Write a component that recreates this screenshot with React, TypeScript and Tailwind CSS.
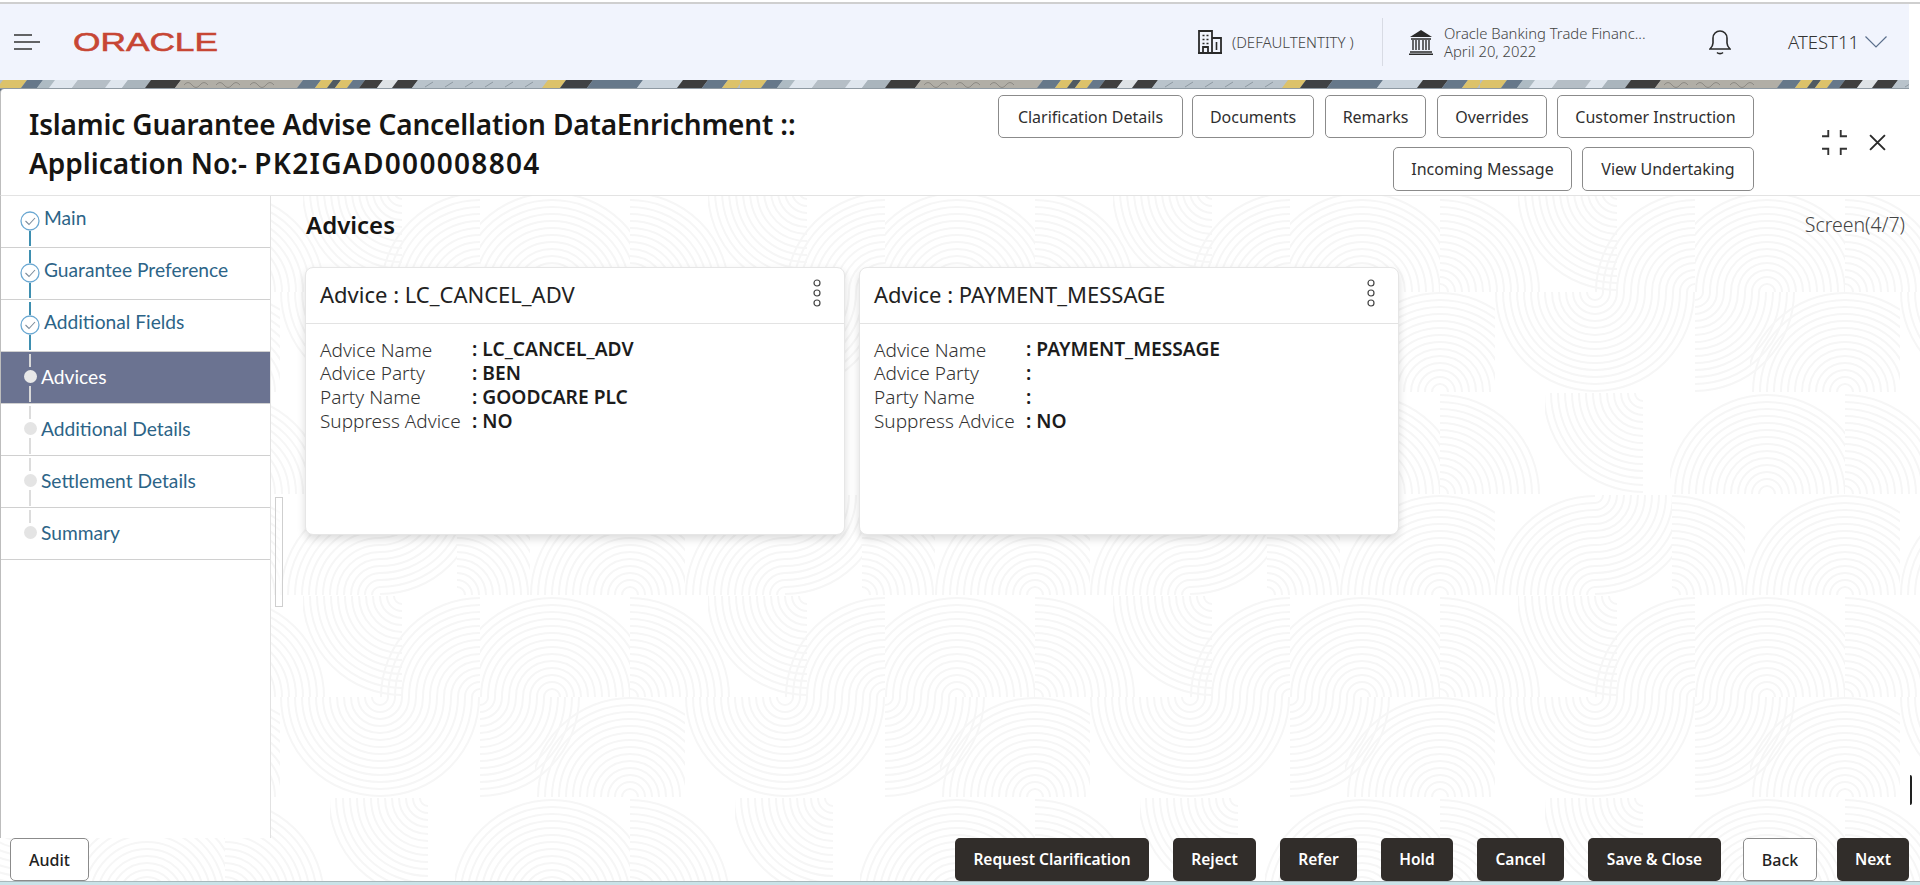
type Step = { label: string; state: 'done' | 'active' | 'todo'; first?: boolean; last?: boolean };

const steps: Step[] = [
  { label: 'Main', state: 'done', first: true },
  { label: 'Guarantee Preference', state: 'done' },
  { label: 'Additional Fields', state: 'done' },
  { label: 'Advices', state: 'active' },
  { label: 'Additional Details', state: 'todo' },
  { label: 'Settlement Details', state: 'todo' },
  { label: 'Summary', state: 'todo', last: true },
];

const topButtons = [
  { label: 'Clarification Details', width: 'w-[185px] -mr-[2px]' },
  { label: 'Documents', width: 'w-[122px]' },
  { label: 'Remarks', width: 'w-[101px]' },
  { label: 'Overrides', width: 'w-[110px] -mr-[1px]' },
  { label: 'Customer Instruction', width: 'w-[197px]' },
];

const footerButtons = [
  { label: 'Request Clarification', width: 'w-[194px]' },
  { label: 'Reject', width: 'w-[83px]' },
  { label: 'Refer', width: 'w-[77px]' },
  { label: 'Hold', width: 'w-[72px]' },
  { label: 'Cancel', width: 'w-[87px]' },
  { label: 'Save & Close', width: 'w-[133px]' },
];

const advices = [
  {
    name: 'LC_CANCEL_ADV',
    rows: [
      ['Advice Name', 'LC_CANCEL_ADV'],
      ['Advice Party', 'BEN'],
      ['Party Name', 'GOODCARE PLC'],
      ['Suppress Advice', 'NO'],
    ],
  },
  {
    name: 'PAYMENT_MESSAGE',
    rows: [
      ['Advice Name', 'PAYMENT_MESSAGE'],
      ['Advice Party', ''],
      ['Party Name', ''],
      ['Suppress Advice', 'NO'],
    ],
  },
];

// x0, y0, x1, y1 = cell that clips the rings, cx, cy = centre of the rings
const motifs = [
  [0, 0, 55, 100, 0, 100],
  [55, 0, 155, 100, 155, 100],
  [155, 0, 232, 100, 155, 0],
  [232, 0, 305, 100, 232, 100],
  [305, 0, 405, 100, 405, 100],
  [0, 101, 100, 202, 0, 202],
  [78, 101, 177, 202, 177, 101],
  [155, 101, 255, 202, 255, 202],
  [255, 101, 405, 202, 327, 202],
  [55, 202, 155, 302, 155, 202],
  [155, 202, 255, 302, 155, 202],
  [255, 202, 355, 302, 255, 202],
  [310, 202, 405, 302, 405, 302],
  [0, 202, 55, 302, 0, 302],
  [105, 303, 203, 404, 203, 303],
  [0, 303, 105, 404, 0, 404],
  [230, 303, 405, 404, 327, 404],
];

const rings = [8, 15, 22, 29, 36, 43, 50, 57, 64, 71, 78, 85, 92, 99];

function RingPattern() {
  return (
    <svg className="absolute inset-0 w-full h-full">
      <defs>
        <pattern id="rings" x={225} y={299} width={405} height={405} patternUnits="userSpaceOnUse">
          {motifs.map(([x0, y0, x1, y1, cx, cy], i) => (
            <svg key={i} x={x0} y={y0} width={x1 - x0} height={y1 - y0}>
              {rings.map((r) => (
                <circle key={r} cx={cx - x0} cy={cy - y0} r={r} fill="none" stroke="#f6f6f6" strokeWidth={2} />
              ))}
            </svg>
          ))}
        </pattern>
      </defs>
      <rect width="100%" height="100%" fill="url(#rings)" />
    </svg>
  );
}

const stripBands: [number, number, string][] = [
  [0, 24, '#dcc26a'],
  [24, 40, '#66788a'],
  [40, 52, '#aebbc3'],
  [52, 75, '#dfe6ee'],
  [75, 108, '#b5bec6'],
  [108, 125, '#dfe6ee'],
  [125, 148, '#aab5bd'],
  [148, 178, '#3d3d3d'],
  [178, 300, '#b1aea6'],
  [300, 318, '#66788a'],
  [318, 330, '#dcc26a'],
  [330, 338, '#4f5a62'],
  [338, 350, '#dcc26a'],
  [350, 362, '#66788a'],
  [362, 380, '#3f3f3f'],
  [380, 395, '#dfe3e6'],
  [395, 415, '#3f3f3f'],
  [415, 545, '#b9c3cb'],
  [545, 563, '#dcc26a'],
  [563, 590, '#3f4245'],
  [590, 640, '#66788a'],
  [640, 680, '#c9d3dc'],
  [680, 705, '#3d3d3d'],
  [705, 725, '#66788a'],
  [725, 740, '#dcc26a'],
];

function Strip() {
  return (
    <svg className="block w-[1909px] h-[8px]">
      <defs>
        <pattern id="strip" width={740} height={8} patternUnits="userSpaceOnUse">
          <rect width={740} height={8} fill="#b5bec6" />
          {stripBands.map(([a, b, color]) => (
            <polygon key={a} points={`${a + 3},0 ${b + 3},0 ${b - 3},8 ${a - 3},8`} fill={color} />
          ))}
          <path d="M184 5q4-5 8 0t8 0 8 0M216 5q4-5 8 0t8 0 8 0M250 5q4-5 8 0t8 0 8 0" fill="none" stroke="#8d8a84" strokeWidth={1} />
          <path d="M425 7l8-5M445 7l8-5M465 7l8-5M485 7l8-5M505 7l8-5M525 7l8-5" stroke="#8e99a2" strokeWidth={1} />
        </pattern>
      </defs>
      <rect width="100%" height="100%" fill="url(#strip)" />
    </svg>
  );
}

function StepMark({ state }: { state: Step['state'] }) {
  if (state === 'done') {
    return (
      <svg viewBox="0 0 20 20" className="w-[20px] h-[20px] shrink-0">
        <circle cx={10} cy={10} r={9} fill="#fff" stroke="#6ba8d2" strokeWidth={1.3} />
        <path d="M5.5 10l3.5 3.5 6-6.5" fill="none" stroke="#7d8d9c" strokeWidth={1.1} />
      </svg>
    );
  }
  return <div className={`w-[13px] h-[13px] my-[3px] rounded-full shrink-0 ${state === 'active' ? 'bg-[#e8e8e8]' : 'bg-[#e4e4e4]'}`} />;
}

function SideRow({ step }: { step: Step }) {
  const done = step.state === 'done';
  const active = step.state === 'active';
  const lineColor = done ? 'bg-[#3e8fb0]' : active ? 'bg-[#d8d8d8]' : 'bg-[#dcdcdc]';
  return (
    <div className={`flex h-[52px] border-b border-[#d0d0d0] pl-[19px] ${active ? 'bg-[#6b7391]' : ''}`}>
      <div className="w-[20px] h-full flex flex-col items-center pt-[2px] pb-[1px] shrink-0">
        <div className={`w-[2px] h-[13px] ${step.first ? '' : lineColor}`} />
        <StepMark state={step.state} />
        <div className={`w-[2px] flex-1 ${step.last ? '' : lineColor}`} />
      </div>
      <div
        className={`font-['Lato'] text-[19.2px] leading-[24px] ${done ? 'ml-[4px] pt-[10px]' : 'ml-[1px] pt-[13px]'} ${
          active ? 'text-white' : 'text-[#2c6487]'
        }`}
      >
        {step.label}
      </div>
    </div>
  );
}

function AdviceCard({ name, rows }: { name: string; rows: string[][] }) {
  return (
    <div className="w-[540px] h-[268px] bg-white rounded-[8px] border border-[#e6e6e6] shadow-[0_4px_8px_rgba(0,0,0,0.14)]">
      <div className="h-[56px] border-b border-[#e3e3e3] flex items-center justify-between pl-[14px] pr-[22px]">
        <div className="text-[22px] text-[#222] -mt-[2px]">Advice : {name}</div>
        <svg viewBox="0 0 10 30" className="w-[10px] h-[30px] -mt-[6px]">
          <circle cx={5} cy={5} r={3} fill="none" stroke="#444" strokeWidth={1.2} />
          <circle cx={5} cy={15} r={3} fill="none" stroke="#444" strokeWidth={1.2} />
          <circle cx={5} cy={25} r={3} fill="none" stroke="#444" strokeWidth={1.2} />
        </svg>
      </div>
      <div className="pt-[14px] pl-[14px]">
        {rows.map(([label, value]) => (
          <div key={label} className="flex h-[23.7px] items-center">
            <div className="w-[152px] text-[19px] font-light text-[#333]">{label}</div>
            <div className="text-[19.2px] font-semibold text-[#1c1c1c]">: {value}</div>
          </div>
        ))}
      </div>
    </div>
  );
}

export default function App() {
  return (
    <div className="w-[1920px] h-[885px] overflow-hidden bg-white flex flex-col font-['Noto_Sans',sans-serif] text-[#222]">
      <div className="h-[2px] shrink-0" />
      <div className="h-[2px] bg-[#cfcfcf] shrink-0" />
      <div className="h-[76px] w-[1909px] bg-[#f1f4fd] flex items-center shrink-0 pl-[14px] pr-[22px]">
        <svg viewBox="0 0 26 16" className="w-[26px] h-[16px]">
          <path d="M0 1h18M0 8h26M0 15h18" stroke="#333" strokeWidth={1.6} />
        </svg>
        <svg width={150} height={30} className="ml-[32px]">
          <text
            x={1}
            y={24}
            textLength={145}
            lengthAdjust="spacingAndGlyphs"
            fontFamily="'Liberation Sans', sans-serif"
            fontSize={26}
            fill="#c74634"
            stroke="#c74634"
            strokeWidth={0.6}
          >
            ORACLE
          </text>
        </svg>
        <div className="flex-1" />
        <svg viewBox="0 0 24 24" className="w-[24px] h-[24px]" fill="none" stroke="#2a2a2a" strokeWidth={1.8}>
          <path d="M1 23V1h13v22M14 8h9v15M0 23h24M5 23v-6h5v6" />
          <path d="M4.5 5.5h2M8.5 5.5h2M4.5 9.5h2M8.5 9.5h2M4.5 13.5h2M8.5 13.5h2" strokeWidth={1.6} />
          <path d="M18.5 12v8" strokeWidth={1.6} />
        </svg>
        <div className="ml-[10px] w-[150px] text-[15px] text-[#444] font-light">(DEFAULTENTITY )</div>
        <div className="w-px h-[48px] bg-[#d8dbe4]" />
        <svg viewBox="0 0 26 26" className="ml-[25px] w-[26px] h-[26px]" fill="none" stroke="#2a2a2a" strokeWidth={1.4}>
          <path d="M13 1L2 8h22z" fill="#2a2a2a" stroke="none" />
          <path d="M5 11v10M8 11v10M11 11v10M15 11v10M18 11v10M21 11v10" />
          <path d="M3 10h20M2 23h22M1 25.3h24" />
        </svg>
        <div className="ml-[10px] w-[265px] flex flex-col text-[14.8px] leading-[18px] text-[#444] font-light">
          <span>Oracle Banking Trade Financ...</span>
          <span>April 20, 2022</span>
        </div>
        <svg viewBox="0 0 22 26" className="w-[22px] h-[26px]" fill="none" stroke="#2a2a2a" strokeWidth={1.6}>
          <path d="M1 20c2-2 3-3 3-6V9a7 7 0 0 1 14 0v5c0 3 1 4 3 6z" />
          <path d="M8 23.5c1.5 1.5 4.5 1.5 6 0" />
        </svg>
        <div className="ml-[57px] w-[69px] whitespace-nowrap text-[18.5px] font-light text-[#333]">ATEST11</div>
        <svg viewBox="0 0 22 12" className="ml-[8px] w-[22px] h-[12px]" fill="none" stroke="#5b6f8c" strokeWidth={1.2}>
          <path d="M0.5 0.5L11 11 21.5 0.5" />
        </svg>
      </div>
      <Strip />
      <div className="h-px w-[1909px] bg-[#8f9aa3] shrink-0" />

      <div className="shrink-0 bg-[linear-gradient(#5b6d7f,#5b6d7f)] bg-no-repeat bg-[length:6px_6px]">
        <div className="h-[107px] bg-white border-b border-[#e3e3e3] border-l border-l-[#bdbdbd] flex justify-between rounded-tl-[4px]">
          <div className="pl-[28px] pt-[16px] text-[28px] leading-[39px] font-semibold text-[#161513]">
            <div className="tracking-[-0.16px]">Islamic Guarantee Advise Cancellation DataEnrichment ::</div>
            <div>
              Application No:- <span className="tracking-[1.3px]">PK2IGAD000008804</span>
            </div>
          </div>
          <div className="flex items-start">
            <div className="w-[756px] pt-[6px] flex flex-col items-end gap-[9px]">
              <div className="flex gap-[11px]">
                {topButtons.map((b) => (
                  <button key={b.label} className={`${b.width} h-[43px] border border-[#8b8b8b] rounded-[5px] bg-white text-[16px] text-[#2f2f2f]`}>
                    {b.label}
                  </button>
                ))}
              </div>
              <div className="flex gap-[10px]">
                <button className="w-[179px] h-[44px] border border-[#8b8b8b] rounded-[5px] bg-white text-[16px] text-[#2f2f2f]">Incoming Message</button>
                <button className="w-[172px] h-[44px] border border-[#8b8b8b] rounded-[5px] bg-white text-[16px] text-[#2f2f2f]">View Undertaking</button>
              </div>
            </div>
            <div className="w-[166px] pt-[40px] pl-[67px] flex items-center gap-[21px]">
              <svg viewBox="0 0 26 26" className="w-[27px] h-[27px]" fill="none" stroke="#333" strokeWidth={1.8}>
                <path d="M1 7h6V1M19 1v6h6M1 19h6v6M19 25v-6h6" />
              </svg>
              <svg viewBox="0 0 16 16" className="w-[17px] h-[17px]" fill="none" stroke="#2a2a2a" strokeWidth={1.8}>
                <path d="M1 1l14 14M15 1L1 15" />
              </svg>
            </div>
          </div>
        </div>
      </div>

      <div className="relative flex-1 min-h-0 flex flex-col">
        <RingPattern />
        <div className="relative flex-1 min-h-0 flex">
          <div className="w-[271px] shrink-0 bg-white border-l border-l-[#bdbdbd] border-r border-r-[#e2e2e2]">
            {steps.map((s) => (
              <SideRow key={s.label} step={s} />
            ))}
          </div>
          <div className="relative flex-1 pl-[34px] pr-[15px]">
            <div className="flex justify-between items-center h-[71px] pb-[13px] pl-[1px]">
              <div className="text-[24px] font-semibold text-[#161513]">Advices</div>
              <div className="text-[19.5px] font-light text-[#444]">Screen(4/7)</div>
            </div>
            <div className="flex gap-[14px]">
              {advices.map((a) => (
                <AdviceCard key={a.name} name={a.name} rows={a.rows} />
              ))}
            </div>
            {/* scroll thumb next to the train stop list */}
            <div className="absolute left-[4px] top-[301px] w-[8px] h-[110px] border border-[#cfcfcf] bg-white/60" />
            {/* leftover edge of the outer window on the right */}
            <div className="absolute right-[8px] top-[579px] w-[2px] h-[30px] bg-[#222] rounded-r-[2px]" />
          </div>
        </div>
        <div className="relative h-[43px] shrink-0 flex justify-between pl-[10px] pr-[11px]">
          <button className="w-[79px] h-[43px] border border-[#8b8b8b] rounded-[5px] bg-white text-[16px] font-medium text-[#222]">Audit</button>
          <div className="flex gap-[24px]">
            {footerButtons.map((b) => (
              <button key={b.label} className={`${b.width} h-[43px] rounded-[5px] bg-[#312d2a] text-white text-[15.5px] font-semibold`}>
                {b.label}
              </button>
            ))}
            <button className="w-[74px] -ml-[2px] h-[43px] border border-[#8b8b8b] rounded-[5px] bg-white text-[16px] font-medium text-[#222]">Back</button>
            <button className="w-[72px] -ml-[4px] h-[43px] rounded-[5px] bg-[#312d2a] text-white text-[15.5px] font-semibold">Next</button>
          </div>
        </div>
        <div className="relative h-[4px] shrink-0 bg-[#c9e3e8] border-t border-t-[#a9b8bb]" />
      </div>
    </div>
  );
}
